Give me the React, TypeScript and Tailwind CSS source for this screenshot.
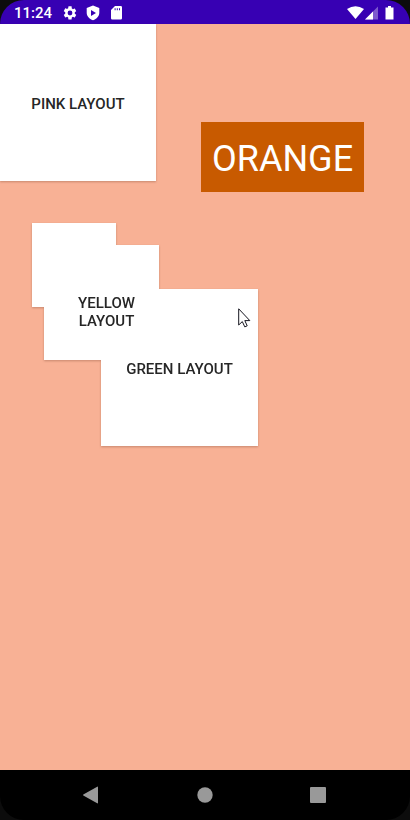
import React from "react";

const tile =
  "flex items-center justify-center bg-white text-center text-[15px] leading-[18px] font-medium text-[#262626]";

function StatusBar() {
  return (
    <header className="bg-[#0c0c0c]">
      <div className="flex h-6 items-center justify-between rounded-t-3xl bg-[#3700b3] pt-px pr-3 pl-3.5 text-white">
        <div className="flex items-center">
          <time className="w-12 text-[15px] leading-6 font-medium">11:24</time>
          <svg width="16" height="16" viewBox="0 0 24 24" fill="currentColor" aria-hidden="true">
            <path d="M19.14 12.94c.04-.3.06-.61.06-.94s-.02-.64-.07-.94l2.03-1.58a.49.49 0 0 0 .12-.61l-1.92-3.32a.49.49 0 0 0-.59-.22l-2.39.96a7 7 0 0 0-1.62-.94l-.36-2.54A.48.48 0 0 0 13.92 2h-3.84a.47.47 0 0 0-.47.41l-.36 2.54c-.59.24-1.13.57-1.62.94l-2.39-.96a.47.47 0 0 0-.59.22L2.74 8.87a.47.47 0 0 0 .12.61l2.03 1.58c-.05.3-.09.63-.09.94s.02.64.07.94l-2.03 1.58a.49.49 0 0 0-.12.61l1.92 3.32c.12.22.37.29.59.22l2.39-.96c.5.38 1.03.7 1.62.94l.36 2.54c.05.24.24.41.48.41h3.84c.24 0 .44-.17.47-.41l.36-2.54c.59-.24 1.13-.56 1.62-.94l2.39.96c.22.08.47 0 .59-.22l1.92-3.32a.47.47 0 0 0-.12-.61zM12 15.6A3.6 3.6 0 1 1 12 8.400a3.600 3.600 0 0 1 0 7.200z" />
          </svg>
          <svg className="ml-2" width="14" height="16" viewBox="0 0 14 16" fill="currentColor" aria-hidden="true">
            <path fillRule="evenodd" d="M7 .500l6.300 2.400v4.900c0 3.300-2.600 6.200-6.300 7.400-3.700-1.200-6.300-4.100-6.300-7.400V2.900zM5 5v6l5-3z" />
          </svg>
          <svg className="ml-2" width="16" height="16" viewBox="0 0 16 16" fill="currentColor" aria-hidden="true">
            <path fillRule="evenodd" d="M7 1h5.800A1.200 1.200 0 0 1 14 2.200v11.100a1.200 1.200 0 0 1-1.200 1.200H4.200A1.200 1.200 0 0 1 3 13.300V5zM6.600 3.200v2h1v-2zM8.800 3.200v2h1v-2zM11 3.200v2h1v-2z" />
          </svg>
        </div>
        <svg width="51" height="16" viewBox="0 0 51 16" fill="currentColor" aria-hidden="true">
          <path d="M0 4Q8.500-1.500 17 4L8.500 14z" />
          <path d="M31 1.500v13H18z" opacity="0.35" />
          <path d="M26 6.500v8h-8z" />
          <path d="M41 1h3v1.500h2.500v12h-8v-12H41z" />
        </svg>
      </div>
    </header>
  );
}

function Cursor() {
  return (
    <svg className="absolute top-[85px] right-[7px]" width="13" height="20" viewBox="0 0 13 20" aria-hidden="true">
      <path
        d="M.7.800v16.200l3.600-3.400 2.500 5.300 2.400-1.100-2.400-5.200h5z"
        fill="white"
        stroke="#15151f"
        strokeWidth="1"
      />
    </svg>
  );
}

function Workspace() {
  return (
    <main className="flex-1 bg-[#f8b195]">
      <div className="flex items-start">
        <button type="button" className={`${tile} h-[157px] w-[156px] pt-0.5 shadow-[0_1px_2px_rgba(90,40,20,0.3)]`}>
          PINK LAYOUT
        </button>
        <button
          type="button"
          className="mt-[98px] ml-[45px] flex h-[70px] items-center bg-[#c85a00] px-[11px] pt-1 text-4xl leading-none text-white"
        >
          ORANGE
        </button>
      </div>
      <div className="relative mt-[31px] ml-8 h-[223px] w-[226px] drop-shadow-[0_1px_1px_rgba(90,40,20,0.3)]">
        <button type="button" aria-label="Layout" className={`${tile} absolute top-0 left-0 h-[84px] w-[84px]`} />
        <button type="button" className={`${tile} absolute right-0 bottom-0 h-[157px] w-[157px] pt-0.5`}>
          GREEN LAYOUT
        </button>
        <button type="button" className={`${tile} absolute top-[22px] left-3 h-[115px] w-[115px] pt-[18px] pl-2.5`}>
          YELLOW
          <br />
          LAYOUT
        </button>
        <Cursor />
      </div>
    </main>
  );
}

function NavigationBar() {
  return (
    <nav className="bg-[#0c0c0c]" aria-label="System">
      <div className="flex h-[50px] items-center justify-center gap-24 rounded-b-3xl bg-black text-[#999]">
        <button type="button" aria-label="Back">
          <svg width="20" height="18" viewBox="0 0 20 18" fill="currentColor" aria-hidden="true">
            <path d="M17 1.200v15.600q0 .8-.8.500L2.300 9.500q-.6-.5 0-1L16.200.700q.8-.3.800.500z" />
          </svg>
        </button>
        <button type="button" aria-label="Home">
          <svg width="16" height="16" viewBox="0 0 16 16" fill="currentColor" aria-hidden="true">
            <circle cx="8" cy="8" r="7.700" />
          </svg>
        </button>
        <button type="button" aria-label="Overview">
          <svg width="20" height="18" viewBox="0 0 20 18" fill="currentColor" aria-hidden="true">
            <rect x="1" y="1" width="16" height="16" rx="1" />
          </svg>
        </button>
      </div>
    </nav>
  );
}

export default function App() {
  return (
    <div className="flex min-h-screen flex-col font-['Roboto',sans-serif]">
      <StatusBar />
      <Workspace />
      <NavigationBar />
    </div>
  );
}
